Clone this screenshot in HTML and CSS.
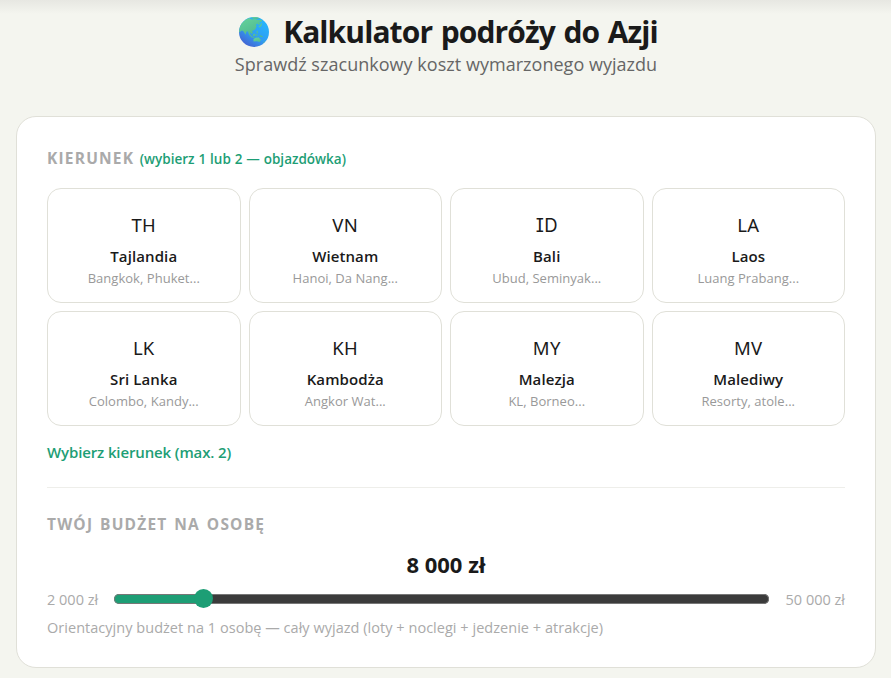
FILE: index.html
```html
<!doctype html>
<html lang="pl">
  <head>
    <meta charset="UTF-8" />
    <meta name="viewport" content="width=device-width, initial-scale=1.0" />
    <title>Kalkulator podróży do Azji</title>
    <link rel="stylesheet" href="styles.css">
  </head>
  <body>
    <header class="header">
      <h1 class="title">
        <svg class="globe" viewBox="0 0 30 30" aria-hidden="true">
          <defs>
            <linearGradient id="sea" x1="0.8" y1="0.2" x2="0.25" y2="1">
              <stop offset="0" stop-color="#27b2fb" />
              <stop offset="0.5" stop-color="#2f9df3" />
              <stop offset="1" stop-color="#4560d0" />
            </linearGradient>
            <linearGradient id="land" x1="0" y1="0" x2="0.6" y2="1">
              <stop offset="0" stop-color="#66d49b" />
              <stop offset="1" stop-color="#50b890" />
            </linearGradient>
          </defs>
          <circle cx="15" cy="15" r="15" fill="url(#sea)" />
          <g fill="url(#land)">
            <path d="M0 15A15 15 0 0 1 10 .9L13 2.500l3-.5 3 1 4-.3-.5 2-2 .3.5 2-1.500 1-1-1.500-1.500 1 .5 2-1 2.500-2 1.500-1.500.2.8 2-1 1.300-1.300-1.500-.5 1 1 2.700-1 0-1.500-3-.5-2-1.500.5-1 3-1.500-2.500-1-1.500-2 0-1 1.500z" />
            <path d="M12 .4a15 15 0 0 1 9 .9l-3 .7-4-.3z" />
            <path d="M19.500 9.500l2-1.500.5-2 1 .5-.7 2.700-2 1.300zM17.500 14l1-.5.5 2.500-1 .5zM14 17.500l2-1 .5 1.500-1 1.300-1.500-.3zM10.500 17l2.500 2.500 2.500.7-.3.8-3-.7zM17 17.500l1.500-.3-.3 2-1 0zM20.500 18l3.500 1.300-1 .9-2.500-1z" />
            <path d="M14.500 22l2.500-1.500 1.500.3 1-.6 2.500 2.800-1.500 2-2.500-.8-3.500.4zM24 25.500l1.700-1.500-.7 1.800z" />
          </g>
        </svg>
        <span class="title-text">Kalkulator podróży do Azji</span>
      </h1>
      <p class="subtitle">Sprawdź szacunkowy koszt wymarzonego wyjazdu</p>
    </header>

    <main class="card">
      <section class="section">
        <h2 class="label">
          Kierunek <span class="hint">(wybierz 1 lub 2 — objazdówka)</span>
        </h2>
        <div class="countries">
          <button type="button" class="country">
            <span class="code">TH</span>
            <span class="name">Tajlandia</span>
            <span class="places">Bangkok, Phuket...</span>
          </button>
          <button type="button" class="country">
            <span class="code">VN</span>
            <span class="name">Wietnam</span>
            <span class="places">Hanoi, Da Nang...</span>
          </button>
          <button type="button" class="country">
            <span class="code code-serif-i">ID</span>
            <span class="name">Bali</span>
            <span class="places">Ubud, Seminyak...</span>
          </button>
          <button type="button" class="country">
            <span class="code">LA</span>
            <span class="name">Laos</span>
            <span class="places">Luang Prabang...</span>
          </button>
          <button type="button" class="country">
            <span class="code">LK</span>
            <span class="name">Sri Lanka</span>
            <span class="places">Colombo, Kandy...</span>
          </button>
          <button type="button" class="country">
            <span class="code">KH</span>
            <span class="name">Kambodża</span>
            <span class="places">Angkor Wat...</span>
          </button>
          <button type="button" class="country">
            <span class="code">MY</span>
            <span class="name">Malezja</span>
            <span class="places">KL, Borneo...</span>
          </button>
          <button type="button" class="country">
            <span class="code">MV</span>
            <span class="name">Malediwy</span>
            <span class="places">Resorty, atole...</span>
          </button>
        </div>
        <p class="message">Wybierz kierunek (max. 2)</p>
      </section>

      <section class="section">
        <h2 class="label">Twój budżet na osobę</h2>
        <div class="amount">8 000 zł</div>
        <div class="slider-row">
          <span class="limit">2 000 zł</span>
          <input
            type="range"
            class="slider"
            min="2000"
            max="50000"
            step="500"
            value="8000"
            aria-label="Budżet"
            style="--fill: 12.5%"
          />
          <span class="limit">50 000 zł</span>
        </div>
        <p class="note">
          Orientacyjny budżet na 1 osobę — cały wyjazd (loty + noclegi +
          jedzenie + atrakcje)
        </p>
      </section>
    </main>
  </body>
</html>
```
FILE: styles.css
```css
* {
  box-sizing: border-box;
}

body {
  --green: #1d9e75;
  --line: #e0e0d8;
  margin: 0;
  padding: 14px 15px 0 16px;
  min-height: 100vh;
  font-family: "Open Sans", "Noto Sans", sans-serif;
  color: #1a1a1a;
  background: linear-gradient(#e7e7e2, #f4f5ef 14px) no-repeat #f4f5ef;
}

h1,
h2,
p {
  margin: 0;
}

.header {
  height: 102px;
  text-align: center;
}

.title {
  display: flex;
  justify-content: center;
  align-items: center;
  gap: 14px;
  height: 36px;
  padding-left: 5px;
  font-size: 30px;
  line-height: 36px;
  font-weight: 700;
}

.globe {
  width: 30px;
  height: 30px;
}

.title-text {
  letter-spacing: -0.9px;
  word-spacing: 1.7px;
  white-space: nowrap;
}

.subtitle {
  font-size: 18px;
  line-height: 28px;
  letter-spacing: 0.03px;
  color: #666;
}

.card {
  padding: 29px 30px;
  height: 552px;
  background: #fff;
  border: 1px solid var(--line);
  border-radius: 20px;
}

.section + .section {
  margin-top: 23px;
  padding-top: 24px;
  border-top: 1px solid #eeeeea;
}

.label {
  font-size: 15.5px;
  line-height: 24px;
  font-weight: 700;
  letter-spacing: 1.2px;
  word-spacing: 1.6px;
  text-transform: uppercase;
  color: #aaa;
}

.hint {
  margin-left: -1.3px;
  font-size: 13.5px;
  font-weight: 600;
  letter-spacing: 0;
  word-spacing: 0.4px;
  text-transform: none;
  color: var(--green);
}

.countries {
  display: grid;
  grid-template-columns: repeat(4, 1fr);
  gap: 8px;
  margin-top: 17px;
}

.country {
  display: flex;
  flex-direction: column;
  align-items: center;
  height: 115px;
  padding: 21px 8px 0;
  font: inherit;
  color: inherit;
  background: #fff;
  border: 1px solid var(--line);
  border-radius: 14px;
}

.code {
  font-family: "Noto Sans", sans-serif;
  font-size: 18.5px;
  line-height: 30px;
  letter-spacing: 0.3px;
}

/* capital I with bars, so it isn't read as a lowercase l */
.code-serif-i {
  font-family: Inter, "Noto Sans", sans-serif;
  font-feature-settings: "cv08", "ss02";
}

.name {
  margin-top: 5px;
  font-size: 15px;
  line-height: 22px;
  font-weight: 600;
  letter-spacing: 0.1px;
}

.places {
  font-size: 13px;
  line-height: 22px;
  letter-spacing: 0.03px;
  color: #999;
}

.message {
  margin-top: 14px;
  font-size: 15px;
  line-height: 24px;
  font-weight: 600;
  letter-spacing: -0.13px;
  color: var(--green);
}

.amount {
  margin-top: 11px;
  font-size: 22px;
  line-height: 34px;
  font-weight: 700;
  text-align: center;
}

.slider-row {
  display: flex;
  align-items: center;
  justify-content: space-between;
  height: 34px;
  margin-top: 1px;
}

.limit {
  font-size: 14.5px;
  color: #aaa;
}

.slider {
  appearance: none;
  width: 655px;
  height: 20px;
  margin: 0;
  background: none;
}

.slider::-webkit-slider-runnable-track {
  height: 10px;
  border-radius: 5px;
  box-shadow: inset 0 0 0 1px #777;
  background: linear-gradient(
    to right,
    var(--green) calc(var(--fill) + 8px),
    #3b3b3b 0
  );
}

.slider::-webkit-slider-thumb {
  appearance: none;
  width: 19px;
  height: 19px;
  margin-top: -5px;
  border-radius: 50%;
  background: var(--green);
}

.note {
  font-size: 14.5px;
  line-height: 24px;
  letter-spacing: 0.03px;
  color: #aaa;
}
```
